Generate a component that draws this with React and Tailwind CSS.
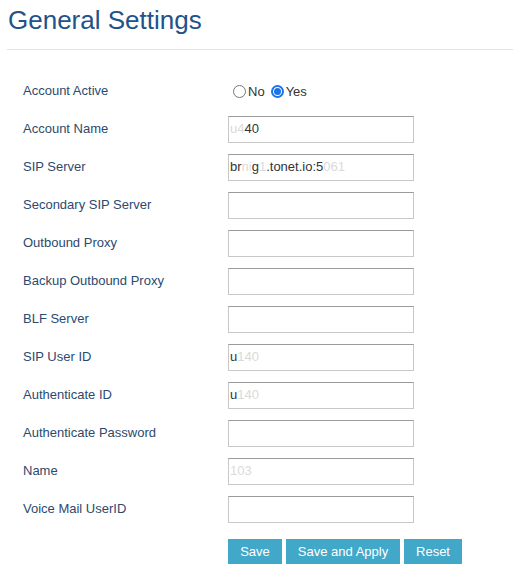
const FONT = { fontFamily: '"Liberation Sans", Arial, sans-serif' };

const fields = [
  { label: "Account Name", value: [["u", "light"], ["4", "light"], ["40", "dark"]] },
  { label: "SIP Server", value: [["br", "dark"], ["ni", "light"], ["g", "dark"], ["1", "light"], [".tonet.io:5", "dark"], ["061", "light"]] },
  { label: "Secondary SIP Server" },
  { label: "Outbound Proxy" },
  { label: "Backup Outbound Proxy" },
  { label: "BLF Server" },
  { label: "SIP User ID", value: [["u", "dark"], ["1", "light"], ["4", "light"], ["0", "light"]] },
  { label: "Authenticate ID", value: [["u", "dark"], ["1", "light"], ["4", "light"], ["0", "light"]] },
  { label: "Authenticate Password" },
  { label: "Name", value: [["103", "light"]] },
  { label: "Voice Mail UserID" },
];

function FakeInput({ value }) {
  return (
    <div className="w-[186px] h-[27px] border border-[#c8c8c8] border-t-[#9a9a9a] bg-white flex items-center pl-[1px] text-[13px]">
      {value &&
        value.map(([t, k], i) => (
          <span key={i} className={k === "dark" ? "text-[#333]" : "text-[#dadada]"}>
            {t}
          </span>
        ))}
    </div>
  );
}

function Row({ label, children }) {
  return (
    <div className="flex items-center h-[38px]">
      <div className="w-[221px] pl-4 text-[13px] text-[#2c4a6e]">{label}</div>
      {children}
    </div>
  );
}

function Radio({ checked }) {
  if (checked) {
    return (
      <span className="w-[13px] h-[13px] rounded-full border-2 border-[#1a73e8] flex items-center justify-center">
        <span className="w-[7px] h-[7px] rounded-full bg-[#1a73e8]" />
      </span>
    );
  }
  return <span className="w-[13px] h-[13px] rounded-full border border-[#767676] bg-white" />;
}

export default function App() {
  return (
    <div className="bg-white min-h-[574px] pl-[7px]" style={FONT}>
      <h1 className="text-[26px] leading-none text-[#23528a] pt-[7px] pl-px">General Settings</h1>
      <div className="mt-[16px] border-t border-[#e2e2e2]" />

      <div className="mt-[22px]">
        <Row label="Account Active">
          <div className="flex items-center text-[13px] text-[#333] pl-[5px] mt-px">
            <Radio />
            <span className="ml-[2px]">No</span>
            <span className="ml-[6px] flex items-center">
              <Radio checked />
            </span>
            <span className="ml-[2px]">Yes</span>
          </div>
        </Row>
        {fields.map((f) => (
          <Row key={f.label} label={f.label}>
            <FakeInput value={f.value} />
          </Row>
        ))}
      </div>

      <div className="flex gap-1 pl-[221px] mt-[11px]">
        <button className="h-[25px] w-[54px] bg-[#42a8c9] text-white text-[13px]">Save</button>
        <button className="h-[25px] w-[114px] bg-[#42a8c9] text-white text-[13px]">Save and Apply</button>
        <button className="h-[25px] w-[58px] bg-[#42a8c9] text-white text-[13px]">Reset</button>
      </div>
    </div>
  );
}
